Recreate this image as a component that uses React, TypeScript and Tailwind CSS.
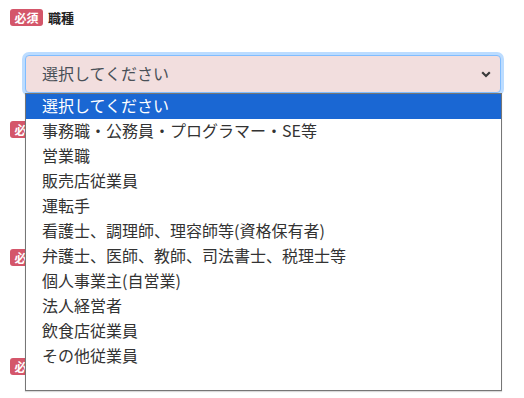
import { Fragment } from 'react';

const options = [
  '選択してください',
  '事務職・公務員・プログラマー・SE等',
  '営業職',
  '販売店従業員',
  '運転手',
  '看護士、調理師、理容師等(資格保有者)',
  '弁護士、医師、教師、司法書士、税理士等',
  '個人事業主(自営業)',
  '法人経営者',
  '飲食店従業員',
  'その他従業員',
];

const Badge = () => (
  <span className="inline-flex h-[17px] w-[33px] items-center justify-center rounded-[3px] bg-[#d4566a] text-[12px] font-bold leading-none text-white">
    必須
  </span>
);

const App = () => {
  return (
    <div
      className="relative h-[398px] w-[524px] overflow-hidden bg-white"
      style={{ fontFamily: '"Noto Sans CJK JP", "Noto Sans", sans-serif' }}
    >
      <form className="px-[10px] pt-[9px]">
        <div className="flex items-center gap-[5px]">
          <Badge />
          <span className="text-[13px] font-bold leading-[17px] text-[#222]">職種</span>
        </div>
        <div className="mt-[29px] pl-[15px]">
          <div className="flex h-[38px] w-[476px] items-center justify-between rounded-[4px] border border-[#80bdff] bg-[#f2dede] pl-[16px] pr-[9px] shadow-[0_0_0_3px_#bcdcff]">
            <span className="pb-[3px] text-[16px] leading-none text-[#495057]">選択してください</span>
            <svg width="10" height="7" viewBox="0 0 10 7" className="mt-[1px]">
              <path d="M1.2 1.3 L5 5 L8.8 1.3" fill="none" stroke="#3a3a3a" strokeWidth="2.2" />
            </svg>
          </div>
        </div>
        <div className="mt-[28px] flex">
          <Badge />
        </div>
        <div className="mt-[111px] flex">
          <Badge />
        </div>
        <div className="mt-[92px] flex">
          <Badge />
        </div>
      </form>

      <ul className="absolute left-[25px] top-[93px] h-[298px] w-[477px] border border-[#767676] bg-white shadow-[0_1px_1px_rgba(0,0,0,0.15)]">
        {options.map((val, i) => (
          <Fragment key={val}>
            <li
              className={
                i === 0
                  ? 'h-[25px] bg-[#1a67d3] pl-[16px] text-[16px] leading-[22px] text-white'
                  : 'h-[25px] pl-[16px] text-[16px] leading-[22px] text-[#333]'
              }
            >
              {val}
            </li>
          </Fragment>
        ))}
      </ul>
    </div>
  );
};

export default App;
